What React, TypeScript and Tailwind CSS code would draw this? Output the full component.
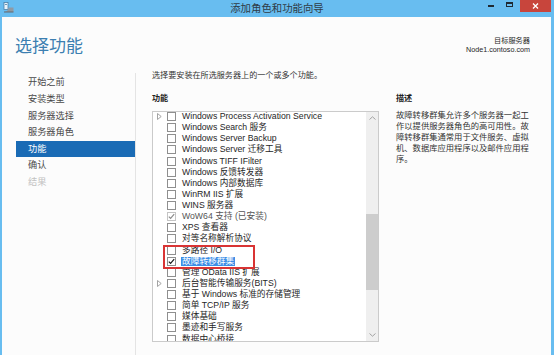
import React from 'react';

const FONT = "font-['Liberation_Sans','Noto_Sans_CJK_SC',sans-serif]";

type Feature = {
  label: string;
  expander?: boolean;
  checked?: boolean;
  disabled?: boolean;
  selected?: boolean;
};

const features: Feature[] = [
  { label: 'Windows Process Activation Service', expander: true },
  { label: 'Windows Search 服务' },
  { label: 'Windows Server Backup' },
  { label: 'Windows Server 迁移工具' },
  { label: 'Windows TIFF IFilter' },
  { label: 'Windows 反馈转发器' },
  { label: 'Windows 内部数据库' },
  { label: 'WinRM IIS 扩展' },
  { label: 'WINS 服务器' },
  { label: 'WoW64 支持 (已安装)', checked: true, disabled: true },
  { label: 'XPS 查看器' },
  { label: '对等名称解析协议' },
  { label: '多路径 I/O' },
  { label: '故障转移群集', checked: true, selected: true },
  { label: '管理 OData IIS 扩展' },
  { label: '后台智能传输服务(BITS)', expander: true },
  { label: '基于 Windows 标准的存储管理' },
  { label: '简单 TCP/IP 服务' },
  { label: '媒体基础' },
  { label: '墨迹和手写服务' },
  { label: '数据中心桥接' },
];

const steps = ['开始之前', '安装类型', '服务器选择', '服务器角色', '功能', '确认', '结果'];

const description = [
  '故障转移群集允许多个服务器一起工',
  '作以提供服务器角色的高可用性。故',
  '障转移群集通常用于文件服务、虚拟',
  '机、数据库应用程序以及邮件应用程',
  '序。',
];

function FeatureRow({ item }: { item: Feature }) {
  return (
    <div className="h-[11.14px] flex items-center">
      <div className="w-[14px] pl-[4px] flex items-center">
        {item.expander && (
          <svg width="5" height="7" viewBox="0 0 5 7">
            <path d="M0.5 0.5 L4.2 3.5 L0.5 6.5 Z" fill="none" stroke="#9a9a9a" strokeWidth="0.9" />
          </svg>
        )}
      </div>
      <div
        className={`w-[9px] h-[9px] border bg-white flex items-center justify-center ${
          item.disabled ? 'border-[#c4c4c4]' : 'border-[#8f8f8f]'
        }`}
      >
        {item.checked && (
          <svg width="7" height="7" viewBox="0 0 7 7">
            <path
              d="M0.8 3.6 L2.6 5.4 L6.2 1.2"
              fill="none"
              stroke={item.disabled ? '#8c8c8c' : '#1a1a1a'}
              strokeWidth="1.2"
            />
          </svg>
        )}
      </div>
      <span
        className={`ml-[5px] px-[1px] text-[8.7px] leading-[9px] whitespace-nowrap ${
          item.selected ? 'bg-[#3d8ee6] text-white' : item.disabled ? 'text-[#555]' : 'text-[#262626]'
        }`}
      >
        {item.label}
      </span>
    </div>
  );
}

export default function App() {
  return (
    <div className={`w-[554px] h-[355px] bg-[#68bdf0] flex flex-col overflow-hidden ${FONT}`}>
      {/* Title bar */}
      <div className="h-[17px] flex items-start shrink-0">
        <div className="w-[80px] h-full pl-[3px] pt-[2px]">
          <svg width="11" height="11" viewBox="0 0 11 11">
            <rect x="1" y="0.5" width="4" height="7" fill="#e8f4fc" stroke="#4d7fa6" strokeWidth="0.8" />
            <rect x="2" y="2" width="2" height="0.8" fill="#4d7fa6" />
            <path d="M4 9 L6 5.5 L10.5 5.5 L10.5 10 L1 10 Z" fill="#8f9aa4" />
            <rect x="1" y="9.5" width="9.5" height="1" fill="#5f6b75" />
          </svg>
        </div>
        <div className="flex-1 text-center text-[10.4px] leading-[15px] pt-[1px] text-[#2f3b46]">
          添加角色和功能向导
        </div>
        <div className="w-[80px] h-full flex justify-end items-start">
          <div className="w-[6px] h-[2px] bg-[#1f2a33] mt-[5px]" />
          <div className="ml-[12px] mt-[2px] w-[7px] h-[5px] border border-[#1f2a33] border-t-2" />
          <div className="ml-[7px] mr-[3px] w-[31px] h-[12px] bg-[#c8453c] flex items-center justify-center">
            <svg width="7" height="6" viewBox="0 0 7 6">
              <path d="M1 0.5 L6 5.5 M6 0.5 L1 5.5" stroke="white" strokeWidth="1.3" />
            </svg>
          </div>
        </div>
      </div>

      {/* Body */}
      <div className="flex-1 ml-[2px] mr-[3px] bg-[#fcfcfc] flex flex-col">
        {/* Header */}
        <div className="h-[52px] flex justify-between items-start shrink-0">
          <h1 className="pl-[13px] pt-[20.5px] text-[17px] leading-[17px] font-normal text-[#3c7fb1]">
            选择功能
          </h1>
          <div className="pr-[21px] pt-[18.5px] text-right text-[7.2px] leading-[9.5px] text-[#1e1e1e]">
            <div>目标服务器</div>
            <div>Node1.contoso.com</div>
          </div>
        </div>

        {/* Columns */}
        <div className="flex-1 flex">
          {/* Steps */}
          <nav className="w-[134px] pl-[14px] mt-[4px] pt-[1.4px] border-r border-[#e4e4e4]">
            {steps.map((s, i) => (
              <div
                key={s}
                className={`h-[16.6px] leading-[16.6px] pl-[12px] text-[9.2px] ${
                  i === 4 ? 'bg-[#1a6bb5] text-white' : i === 6 ? 'text-[#c2c2c2]' : 'text-[#4a4a4a]'
                }`}
              >
                {s}
              </div>
            ))}
          </nav>

          {/* Features */}
          <div className="ml-[16px] w-[227px]">
            <p className="pt-[1px] text-[8.1px] leading-[12px] text-[#333]">
              选择要安装在所选服务器上的一个或多个功能。
            </p>
            <div className="mt-[10.5px] text-[8.1px] leading-[12px] font-bold text-[#222]">功能</div>
            <div className="mt-[6px] h-[231px] border border-[#cbcbcb] bg-white flex">
              <div className="flex-1 overflow-hidden relative">
                <div className="-mt-[0.5px]">
                  {features.map((f) => (
                    <FeatureRow key={f.label} item={f} />
                  ))}
                </div>
                <div className="absolute left-[10px] top-[133px] w-[92px] h-[24px] border-2 border-[#d93434]" />
              </div>
              <div className="w-[12px] bg-[#efefef] flex flex-col">
                <div className="h-[12px] flex items-center justify-center">
                  <svg width="7" height="4" viewBox="0 0 7 4">
                    <path d="M0.5 3.5 L3.5 0.8 L6.5 3.5" fill="none" stroke="#9a9a9a" strokeWidth="0.9" />
                  </svg>
                </div>
                <div className="h-[90px]" />
                <div className="h-[76px] bg-[#cdcdcd]" />
                <div className="flex-1" />
                <div className="h-[12px] flex items-center justify-center">
                  <svg width="7" height="4" viewBox="0 0 7 4">
                    <path d="M0.5 0.5 L3.5 3.2 L6.5 0.5" fill="none" stroke="#9a9a9a" strokeWidth="0.9" />
                  </svg>
                </div>
              </div>
            </div>
          </div>

          {/* Description */}
          <div className="ml-[17px] w-[140px] pt-[24px]">
            <div className="text-[8.1px] leading-[12px] font-bold text-[#222]">描述</div>
            <div className="mt-[4.5px] text-[8.3px] leading-[11px] text-[#333] whitespace-nowrap">
              {description.map((line) => (
                <div key={line}>{line}</div>
              ))}
            </div>
          </div>
        </div>
      </div>
    </div>
  );
}
